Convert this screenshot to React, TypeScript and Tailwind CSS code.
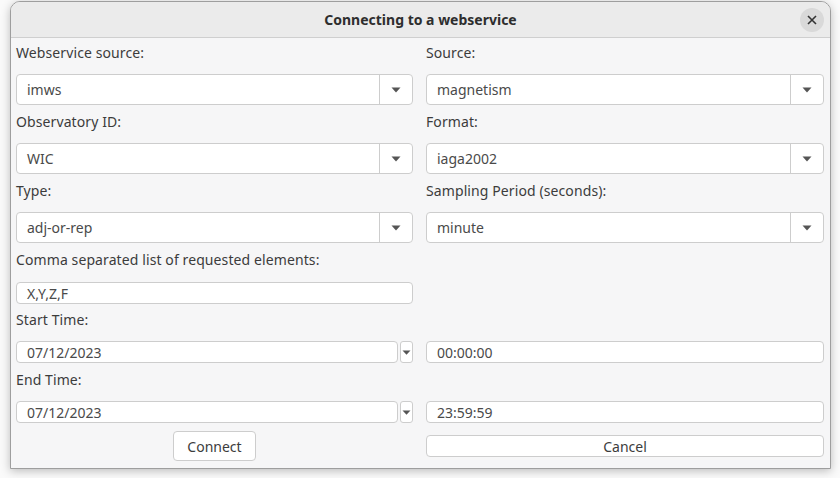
import React from "react";

const font = { fontFamily: '"Noto Sans", "Open Sans", sans-serif' };

function Arrow() {
  return (
    <svg width="10" height="6" viewBox="0 0 10 6">
      <path d="M0.5 0.5 L9.5 0.5 L5 5.5 Z" fill="#555555" />
    </svg>
  );
}

function Combo({ value }: { value: string }) {
  return (
    <div className="flex h-[31px] rounded-[4px] border border-[#cdcdcd] bg-white">
      <div className="flex flex-1 items-center pl-[10px] text-[14px] text-[#4a4a4a]">{value}</div>
      <div className="flex w-[33px] items-center justify-center border-l border-[#cdcdcd]">
        <Arrow />
      </div>
    </div>
  );
}

function Label({ text }: { text: string }) {
  return <div className="flex h-[28px] items-center text-[14px] tracking-[0.1px] text-[#3c3c3c]">{text}</div>;
}

function Field({ value }: { value: string }) {
  return (
    <div className="flex h-[22px] items-center rounded-[4px] border border-[#cdcdcd] bg-white pl-[10px] text-[14px] text-[#4a4a4a]">
      {value}
    </div>
  );
}

function DateRow({ value }: { value: string }) {
  return (
    <div className="flex h-[22px] gap-[2px]">
      <div className="flex flex-1 items-center rounded-[4px] border border-[#cdcdcd] bg-white pl-[10px] text-[14px] text-[#4a4a4a]">
        {value}
      </div>
      <div className="flex w-[13px] items-center justify-center rounded-[3px] border border-[#cdcdcd] bg-white">
        <svg width="9" height="5" viewBox="0 0 9 5">
          <path d="M0.5 0.5 L8.5 0.5 L4.5 4.8 Z" fill="#555555" />
        </svg>
      </div>
    </div>
  );
}

export default function App() {
  return (
    <div className="h-[478px] w-[840px] bg-[#fafafa] pl-[10px] pt-[1px]" style={font}>
      <div className="flex h-[468px] w-[821px] flex-col overflow-hidden rounded-t-[10px] border border-[#9e9e9e] bg-[#f6f6f7] shadow-[0_2px_10px_rgba(0,0,0,0.25)]">
        <div className="relative flex h-[36px] shrink-0 items-center justify-center border-b border-[#cfcfcf] bg-[#ebebeb]">
          <span className="text-[14px] font-bold text-[#2e2e2e]">Connecting to a webservice</span>
          <div className="absolute right-[6px] top-[6px] flex h-[24px] w-[24px] items-center justify-center rounded-full bg-[#d9d9d9]">
            <svg width="10" height="10" viewBox="0 0 10 10">
              <path d="M1 1 L9 9 M9 1 L1 9" stroke="#333" strokeWidth="1.6" />
            </svg>
          </div>
        </div>
        <div className="grid grid-cols-[397px_398px] gap-x-[13px] px-[5px]">
          <div className="flex flex-col">
            <Label text="Webservice source:" />
            <div className="mt-[8px]"><Combo value="imws" /></div>
            <div className="mt-[2px]"><Label text="Observatory ID:" /></div>
            <div className="mt-[8px]"><Combo value="WIC" /></div>
            <div className="mt-[2px]"><Label text="Type:" /></div>
            <div className="mt-[8px]"><Combo value="adj-or-rep" /></div>
            <div className="mt-[2px]"><Label text="Comma separated list of requested elements:" /></div>
            <div className="mt-[9px]"><Field value="X,Y,Z,F" /></div>
            <div className="mt-[1px]"><Label text="Start Time:" /></div>
            <div className="mt-[8px]"><DateRow value="07/12/2023" /></div>
            <div className="mt-[2px]"><Label text="End Time:" /></div>
            <div className="mt-[8px]"><DateRow value="07/12/2023" /></div>
            <div className="mt-[8px] flex h-[30px] justify-center">
              <div className="flex w-[83px] items-center justify-center rounded-[4px] border border-[#cdcdcd] bg-white text-[14px] text-[#3c3c3c]">
                Connect
              </div>
            </div>
          </div>
          <div className="flex flex-col">
            <Label text="Source:" />
            <div className="mt-[8px]"><Combo value="magnetism" /></div>
            <div className="mt-[2px]"><Label text="Format:" /></div>
            <div className="mt-[8px]"><Combo value="iaga2002" /></div>
            <div className="mt-[2px]"><Label text="Sampling Period (seconds):" /></div>
            <div className="mt-[8px]"><Combo value="minute" /></div>
            <div className="mt-[2px] h-[28px]" />
            <div className="mt-[9px] h-[22px]" />
            <div className="mt-[1px] h-[28px]" />
            <div className="mt-[8px]"><Field value="00:00:00" /></div>
            <div className="mt-[2px] h-[28px]" />
            <div className="mt-[8px]"><Field value="23:59:59" /></div>
            <div className="mt-[8px] flex h-[30px] items-center">
              <div className="flex h-[22px] w-full items-center justify-center rounded-[4px] border border-[#cdcdcd] bg-white text-[14px] text-[#3c3c3c]">
                Cancel
              </div>
            </div>
          </div>
        </div>
      </div>
    </div>
  );
}
